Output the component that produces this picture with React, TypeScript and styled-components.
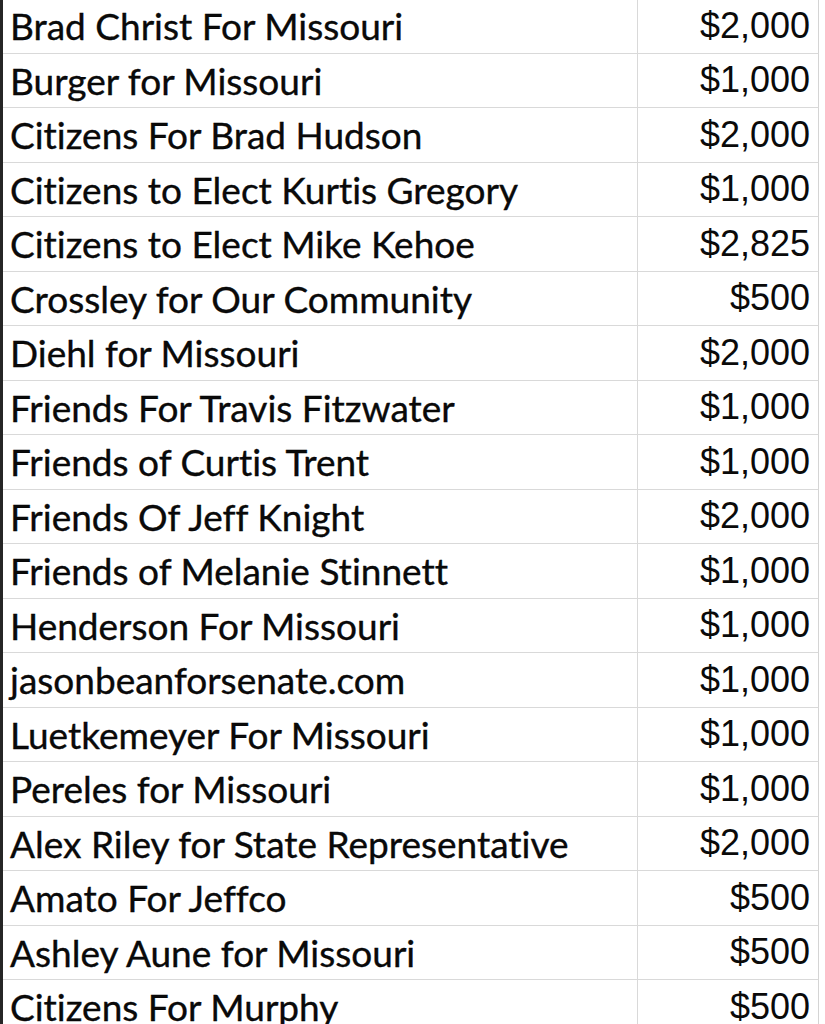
import React from "react";
import styled, { createGlobalStyle } from "styled-components";

const rows: [string, string][] = [
  ["Brad Christ For Missouri", "$2,000"],
  ["Burger for Missouri", "$1,000"],
  ["Citizens For Brad Hudson", "$2,000"],
  ["Citizens to Elect Kurtis Gregory", "$1,000"],
  ["Citizens to Elect Mike Kehoe", "$2,825"],
  ["Crossley for Our Community", "$500"],
  ["Diehl for Missouri", "$2,000"],
  ["Friends For Travis Fitzwater", "$1,000"],
  ["Friends of Curtis Trent", "$1,000"],
  ["Friends Of Jeff Knight", "$2,000"],
  ["Friends of Melanie Stinnett", "$1,000"],
  ["Henderson For Missouri", "$1,000"],
  ["jasonbeanforsenate.com", "$1,000"],
  ["Luetkemeyer For Missouri", "$1,000"],
  ["Pereles for Missouri", "$1,000"],
  ["Alex Riley for State Representative", "$2,000"],
  ["Amato For Jeffco", "$500"],
  ["Ashley Aune for Missouri", "$500"],
  ["Citizens For Murphy", "$500"],
];

const GlobalStyle = createGlobalStyle`
  html, body {
    margin: 0;
    padding: 0;
    background: #ffffff;
    overflow: hidden;
  }
`;

const Sheet = styled.div`
  margin-top: -1px;
  width: 819px;
  display: grid;
  grid-template-columns: 635px 181px;
  grid-auto-rows: 54.5px;
  border-left: 3px solid #262626;
`;

const NameCell = styled.div`
  display: flex;
  align-items: center;
  padding-left: 7px;
  border-right: 1px solid #d9d9d9;
  border-bottom: 1px solid #d9d9d9;
  font-family: Lato, "Liberation Sans", sans-serif;
  font-size: 37px;
  font-variant-ligatures: none;
  -webkit-text-stroke: 0.35px #000;
  color: #0a0a0a;
  white-space: nowrap;
  overflow: hidden;
`;

const AmountCell = styled.div`
  display: flex;
  align-items: center;
  justify-content: flex-end;
  padding-right: 8px;
  border-right: 1px solid #d4d4d4;
  border-bottom: 1px solid #d9d9d9;
  font-family: "Liberation Sans", Arial, sans-serif;
  font-size: 36px;
  color: #0a0a0a;
  white-space: nowrap;
`;

export default function App() {
  return (
    <>
      <GlobalStyle />
      <Sheet>
        {rows.map(([name, amount]) => (
          <React.Fragment key={name}>
            <NameCell>{name}</NameCell>
            <AmountCell>{amount}</AmountCell>
          </React.Fragment>
        ))}
      </Sheet>
    </>
  );
}
